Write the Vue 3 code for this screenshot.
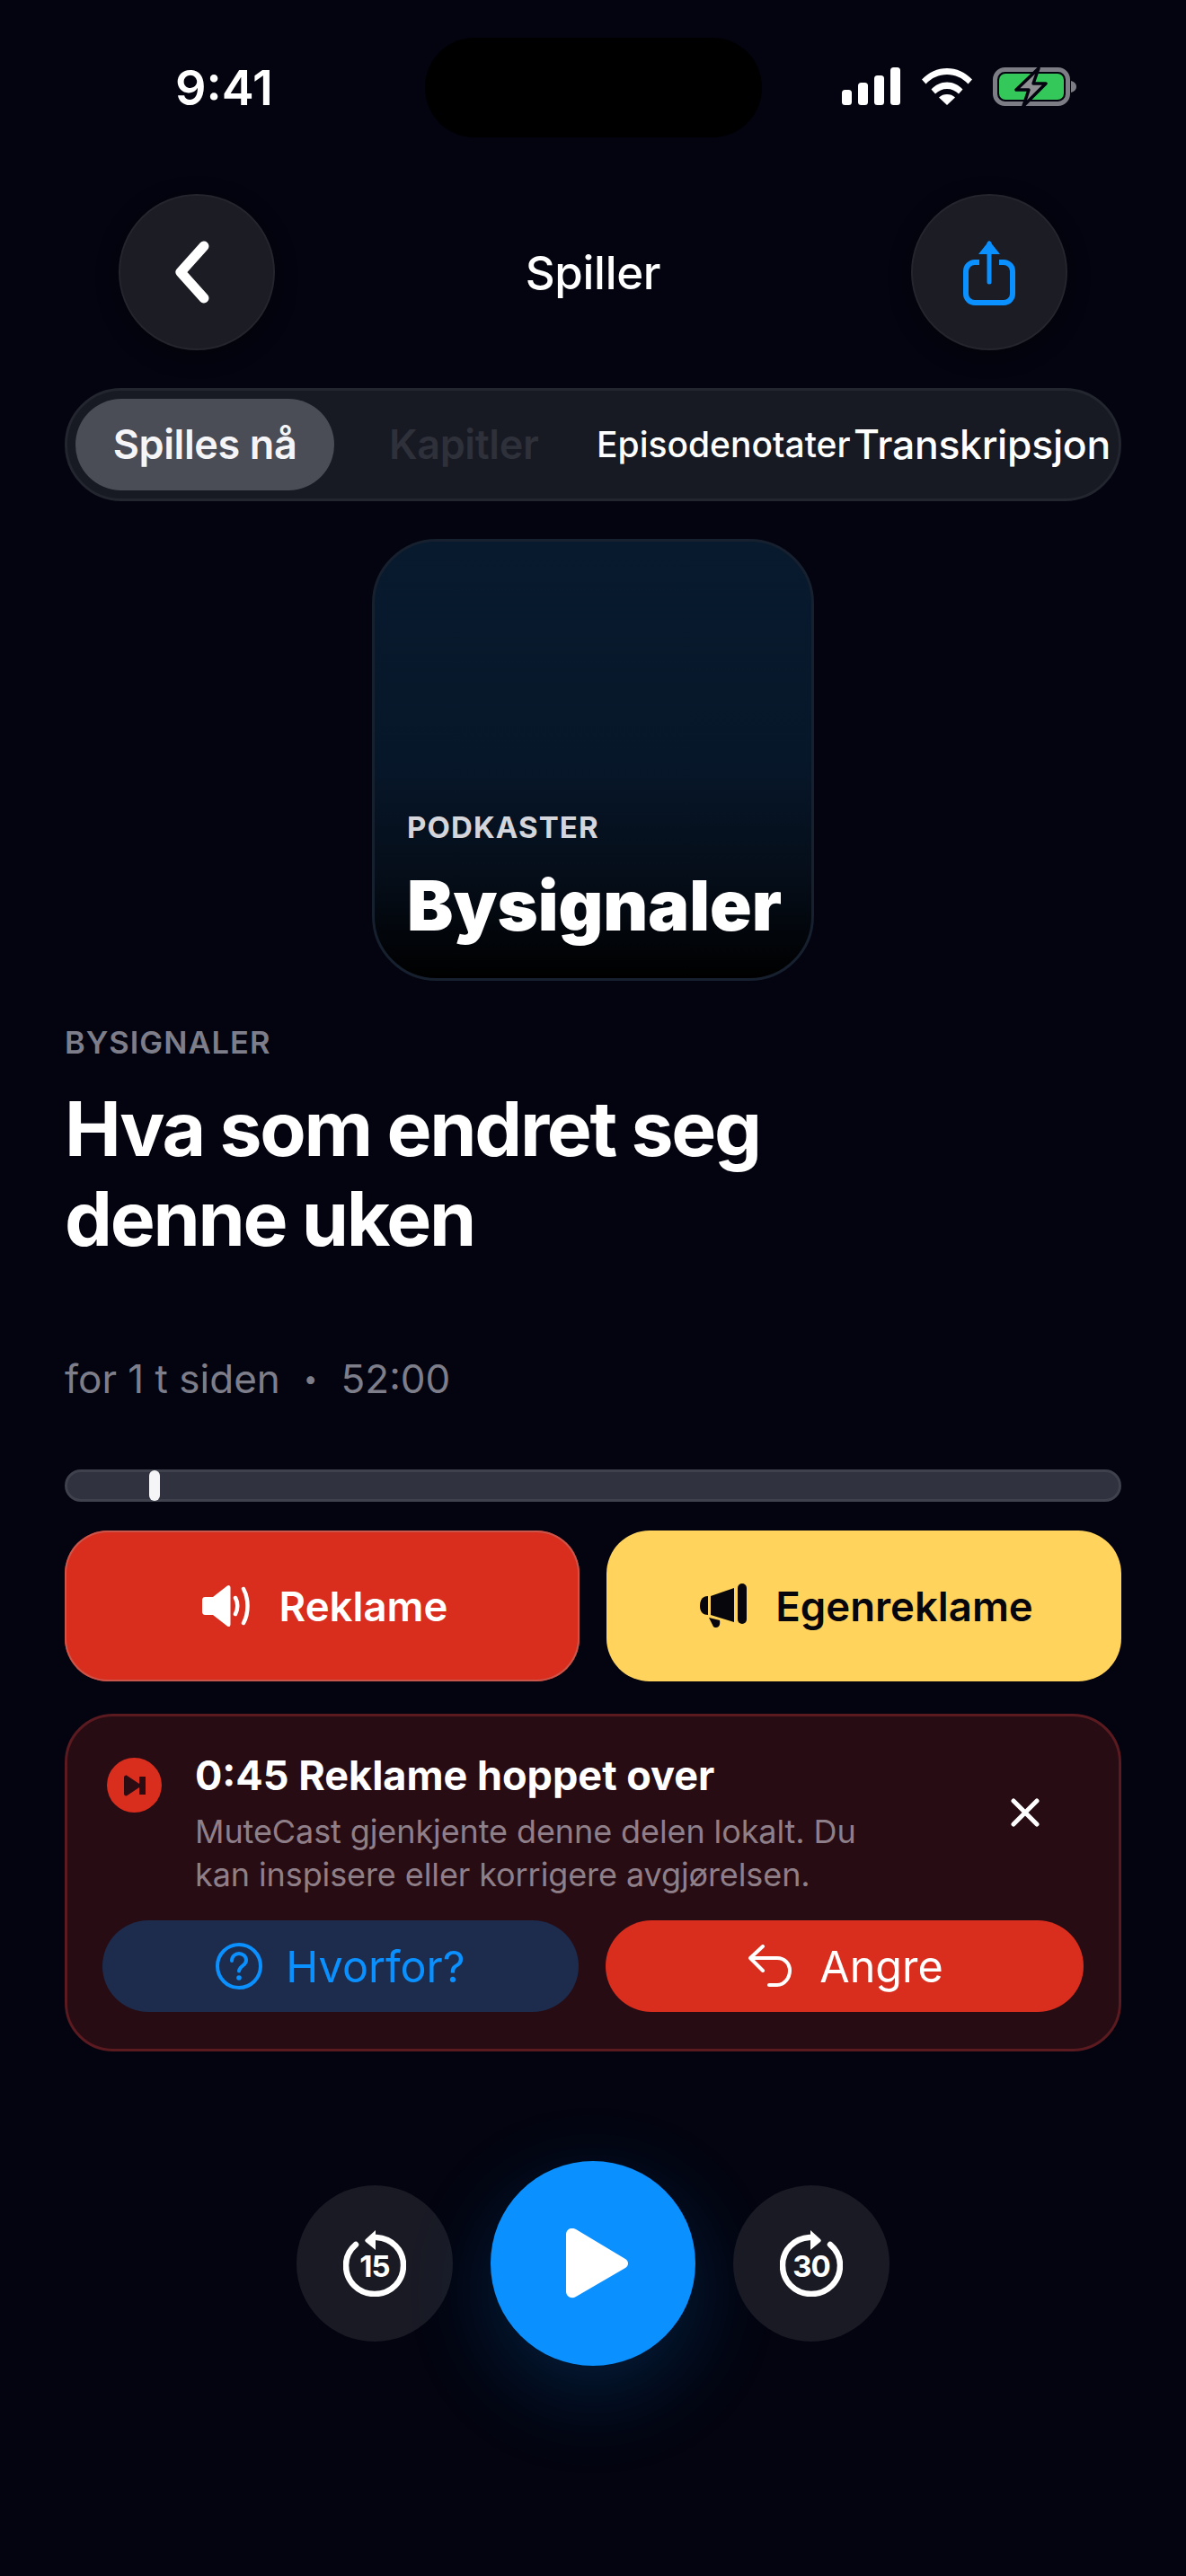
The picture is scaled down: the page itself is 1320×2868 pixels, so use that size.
<script setup>
const tabs = [
  { label: 'Spilles nå', cls: 'tab-active' },
  { label: 'Kapitler', cls: 'tab-dim' },
  { label: 'Episodenotater', cls: 'tab-small' },
  { label: 'Transkripsjon', cls: 'tab-plain' },
]
</script>

<template>
  <div class="page">
    <div class="status">
      <div class="time">9:41</div>
      <div class="island"></div>
      <div class="status-icons">
        <svg class="sig" width="66" height="42" viewBox="0 0 66 42">
          <rect x="0" y="25" width="11" height="17" rx="3.5" fill="#fff"/>
          <rect x="18" y="17" width="11" height="25" rx="3.5" fill="#fff"/>
          <rect x="36" y="9" width="11" height="33" rx="3.5" fill="#fff"/>
          <rect x="54" y="0" width="11" height="42" rx="3.5" fill="#fff"/>
        </svg>
        <svg class="wifi" width="58" height="42" viewBox="0 0 58 42">
          <path d="M1 13.500C8.500 5.500 18.500 1 29 1s20.500 4.500 28 12.500l-4.500 5C46 11.500 38 8 29 8S12 11.500 5.500 18.500z" fill="#fff"/>
          <path d="M11.500 24.500C16 19.500 22 16.500 29 16.500s13 3 17.500 8L42 29.500C38.500 26 34 24 29 24s-9.500 2-13 5.500z" fill="#fff"/>
          <path d="M20 33.500c2.500-2.500 5.500-3.500 9-3.500s6.500 1 9 3.500L29 42z" fill="#fff"/>
        </svg>
        <svg class="bat" width="94" height="46" viewBox="0 0 94 46">
          <rect x="2.500" y="3.500" width="81" height="38" rx="11" fill="none" stroke="#7c7d85" stroke-width="5"/>
          <rect x="7" y="8" width="72" height="29" rx="7" fill="#34c759"/>
          <path d="M87 16c4 1 6 3.500 6 6.500s-2 5.500-6 6.500z" fill="#7c7d85"/>
          <path d="M51 2 26 26h14l-6 18 25-25H45z" fill="#8e8e93" stroke="#03040f" stroke-width="3.500" stroke-linejoin="round"/>
        </svg>
      </div>
    </div>

    <div class="nav">
      <button class="round nav-btn" aria-label="Tilbake">
        <svg class="chev" width="60" height="72" viewBox="0 0 60 72">
          <path d="M41 7 15 36l26 29" fill="none" stroke="#fff" stroke-width="11" stroke-linecap="round" stroke-linejoin="round"/>
        </svg>
      </button>
      <div class="nav-title">Spiller</div>
      <button class="round nav-btn" aria-label="Del">
        <svg width="60" height="76" viewBox="0 0 60 76">
          <path d="M19 27h-5a10 10 0 0 0-10 10v25a10 10 0 0 0 10 10h32a10 10 0 0 0 10-10V37a10 10 0 0 0-10-10h-5" fill="none" stroke="#0a91ff" stroke-width="6"/>
          <path d="M30 49V6" stroke="#0a91ff" stroke-width="5" stroke-linecap="round"/>
          <path d="M18 18 30 3l12 15z" fill="#0a91ff"/>
        </svg>
      </button>
    </div>

    <div class="tabs">
      <div v-for="t in tabs" :key="t.label" class="tab" :class="t.cls">{{ t.label }}</div>
    </div>

    <div class="cover">
      <div class="cover-kicker">PODKASTER</div>
      <div class="cover-title">Bysignaler</div>
    </div>

    <div class="info">
      <div class="kicker">BYSIGNALER</div>
      <h1 class="title">Hva som endret seg<br>denne uken</h1>
      <div class="meta"><span>for 1 t siden</span><span class="dot">•</span><span>52:00</span></div>
    </div>

    <div class="progress"><div class="thumb"></div></div>

    <div class="marks">
      <button class="mark mark-red">
        <svg width="56" height="50" viewBox="0 0 56 50">
          <path d="M3 15h9L28 2.500c1.500-1.200 3.500-.5 3.500 2v41c0 2.500-2 3.200-3.500 2L12 35H3c-1.500 0-3-1.500-3-3V18c0-1.500 1.500-3 3-3z" fill="#fff"/>
          <path d="M37 16c3 5 3 13 0 18" fill="none" stroke="#fff" stroke-width="4.500" stroke-linecap="round"/>
          <path d="M46 6c6 11 6 27 0 38" fill="none" stroke="#fff" stroke-width="4.500" stroke-linecap="round"/>
        </svg>
        <span>Reklame</span>
      </button>
      <button class="mark mark-yellow">
        <svg width="54" height="50" viewBox="0 0 54 50">
          <path d="M12 14 38 5v38L12 35z" fill="#06060c"/>
          <path d="M9 14v21C4 35 0 32 0 25s3-11 9-11z" fill="#06060c"/>
          <rect x="42" y="0" width="10" height="45" rx="5" fill="#06060c"/>
          <path d="M10 38l12 3c1 5-1 8-4 8s-3-1-4-3z" fill="#06060c"/>
        </svg>
        <span>Egenreklame</span>
      </button>
    </div>

    <div class="banner">
      <div class="banner-top">
        <div class="skip-badge">
          <svg width="26" height="24" viewBox="0 0 26 24">
            <path d="M1 3c0-2 2-3 3.500-2L18 10v-8h7v20h-7v-8L4.500 23C3 24 1 23 1 21z" fill="#2a0c12"/>
          </svg>
        </div>
        <div class="banner-text">
          <div class="banner-title">0:45 Reklame hoppet over</div>
          <div class="banner-desc">MuteCast gjenkjente denne delen lokalt. Du kan inspisere eller korrigere avgjørelsen.</div>
        </div>
        <svg class="close" width="32" height="32" viewBox="0 0 32 32">
          <path d="M3 3l26 26M29 3 3 29" stroke="#fff" stroke-width="5" stroke-linecap="round"/>
        </svg>
      </div>
      <div class="banner-actions">
        <button class="pill pill-blue">
          <svg width="52" height="52" viewBox="0 0 52 52">
            <circle cx="26" cy="26" r="24" fill="none" stroke="#0a91ff" stroke-width="4"/>
            <path d="M18 20c0-5 4-8 8-8s8 3 8 7.500c0 6-8 6.500-8 12" fill="none" stroke="#0a91ff" stroke-width="4" stroke-linecap="round"/>
            <circle cx="26" cy="39" r="2.800" fill="#0a91ff"/>
          </svg>
          <span>Hvorfor?</span>
        </button>
        <button class="pill pill-red">
          <svg width="50" height="48" viewBox="0 0 50 48">
            <path d="M17 2 3 15l14 14" fill="none" stroke="#fff" stroke-width="4" stroke-linecap="round" stroke-linejoin="round"/>
            <path d="M4 15h29c8 0 14 6 14 14s-6 16-14 16H24" fill="none" stroke="#fff" stroke-width="4" stroke-linecap="round"/>
          </svg>
          <span>Angre</span>
        </button>
      </div>
    </div>

    <div class="controls">
      <button class="round side" aria-label="Tilbake 15">
        <svg width="70" height="74" viewBox="0 0 70 74">
          <path d="M14 16C7 22 3 30 3 39c0 18 14 32 32 32s32-14 32-32c0-17-13-30-30-31" fill="none" stroke="#fff" stroke-width="6.500" stroke-linecap="round"/>
          <path d="M36 0 25 10c-1 1-1 2 0 3l11 9z" fill="#fff"/>
          <text x="35" y="52" text-anchor="middle" class="skip-num">15</text>
        </svg>
      </button>
      <button class="play" aria-label="Spill">
        <svg class="play-icon" width="70" height="78" viewBox="0 0 70 78">
          <path d="M0 7C0 1 6-2 11 1l55 33c4 2.500 4 7.500 0 10L11 76c-5 3-11 0-11-6z" fill="#fff"/>
        </svg>
      </button>
      <button class="round side" aria-label="Frem 30">
        <svg width="70" height="74" viewBox="0 0 70 74">
          <path d="M56 16c7 6 11 14 11 23 0 18-14 32-32 32S3 57 3 39C3 22 16 9 33 8" fill="none" stroke="#fff" stroke-width="6.500" stroke-linecap="round"/>
          <path d="M34 0 45 10c1 1 1 2 0 3l-11 9z" fill="#fff"/>
          <text x="35" y="52" text-anchor="middle" class="skip-num">30</text>
        </svg>
      </button>
    </div>
  </div>
</template>

<style>
html, body { margin: 0; background: #03040f; }
</style>

<style scoped>
.page {
  width: 1320px;
  height: 2868px;
  background: #03040f;
  color: #fff;
  font-family: Inter, "Liberation Sans", sans-serif;
  display: flex;
  flex-direction: column;
  overflow: hidden;
}
button { font-family: inherit; border: 0; padding: 0; cursor: pointer; }

.status {
  display: grid;
  grid-template-columns: 473px 375px 1fr;
  height: 110px;
  margin-top: 42px;
}
.time {
  padding-left: 195px;
  font-size: 54px;
  font-weight: 600;
  line-height: 110px;
  margin-top: 1px;
}
.island { background: #000; border-radius: 55px; }
.status-icons {
  display: flex;
  align-items: flex-start;
  padding: 33px 0 0 89px;
}
.wifi { margin-left: 22px; }
.bat { margin-left: 22px; margin-top: -1px; }

.nav {
  margin-top: 64px;
  padding: 0 132px;
  display: flex;
  align-items: center;
  justify-content: space-between;
}
.round {
  border-radius: 50%;
  display: flex;
  align-items: center;
  justify-content: center;
}
.nav-btn {
  width: 174px;
  height: 174px;
  background: #1b1c24;
  border: 2px solid #24252d;
  box-shadow: 0 6px 24px rgba(0, 0, 0, .4);
}
.chev { margin-left: -6px; }
.nav-title { font-size: 51px; font-weight: 500; letter-spacing: -.3px; }

.tabs {
  margin: 42px 72px 0;
  height: 126px;
  box-sizing: border-box;
  background: #171923;
  border: 3px solid #23252f;
  border-radius: 63px;
  display: flex;
  align-items: center;
  padding: 0 9px;
  white-space: nowrap;
}
.tab { flex: none; font-size: 45px; font-weight: 600; line-height: 102px; letter-spacing: -.4px; }
.tab-active {
  width: 288px;
  text-align: center;
  background: #4a4c56;
  border-radius: 51px;
  color: #f5f5f7;
}
.tab-dim { margin-left: 61px; color: #2e303a; width: 165px; }
.tab-small { margin-left: 66px; font-size: 39px; width: 286px; font-weight: 500; letter-spacing: 0; }
.tab-plain { font-size: 44.500px; letter-spacing: -.3px; font-weight: 500; }

.cover {
  align-self: center;
  margin-top: 42px;
  width: 492px;
  height: 492px;
  box-sizing: border-box;
  border: 3px solid #16202e;
  border-radius: 72px;
  background: linear-gradient(180deg, #081a2e 0%, #07172a 50%, #050d18 78%, #000 100%);
  padding: 0 36px 35px;
  display: flex;
  flex-direction: column;
  justify-content: flex-end;
}
.cover-kicker {
  font-size: 33px;
  font-weight: 700;
  letter-spacing: 1.100px;
  color: #d4d6db;
  margin-bottom: 21px;
  line-height: 40px;
}
.cover-title {
  font-size: 77px;
  font-weight: 900;
  line-height: 92px;
  white-space: nowrap;
}

.info { padding: 0 72px; }
.kicker {
  margin-top: 46px;
  font-size: 34.500px;
  font-weight: 600;
  letter-spacing: 1px;
  color: #7d7e8a;
  line-height: 46px;
}
.title {
  margin: 23px 0 0;
  font-size: 84px;
  font-weight: 700;
  line-height: 100px;
  letter-spacing: -2.300px;
}
.meta {
  margin-top: 98px;
  font-size: 44px;
  color: #7d7e8a;
  line-height: 60px;
  display: flex;
}
.dot { font-size: 28px; margin: 0 26px; }

.progress {
  margin: 71px 72px 0;
  height: 36px;
  box-sizing: border-box;
  background: #30323f;
  border: 3px solid #3f414d;
  border-radius: 18px;
  position: relative;
}
.thumb {
  position: absolute;
  left: 91px;
  top: -2px;
  width: 12px;
  height: 34px;
  background: #f5f5f7;
  border-radius: 6px;
}

.marks {
  margin: 32px 72px 0;
  display: flex;
  gap: 30px;
}
.mark {
  flex: 1;
  height: 168px;
  box-sizing: border-box;
  padding-left: 6px;
  border-radius: 48px;
  display: flex;
  align-items: center;
  justify-content: center;
  gap: 30px;
  font-size: 45.500px;
  font-weight: 600;
}
.mark-red { background: #d92d1e; color: #fff; box-shadow: inset 0 0 0 2px #c9554b; }
.mark-yellow { background: #ffd35c; color: #06060c; }

.banner {
  margin: 36px 72px 0;
  box-sizing: border-box;
  height: 376px;
  background: #270c13;
  border: 3px solid #5a1a20;
  border-radius: 54px;
  padding: 0 39px;
}
.banner-top {
  display: flex;
  align-items: flex-start;
  height: 227px;
}
.skip-badge {
  margin: 46px 0 0 5px;
  width: 61px;
  height: 61px;
  border-radius: 50%;
  background: #d92d1e;
  display: flex;
  align-items: center;
  justify-content: center;
  flex: none;
}
.banner-text { margin: 38px 0 0 37px; width: 800px; flex: none; }
.banner-title { font-size: 45px; font-weight: 700; line-height: 56px; }
.banner-desc {
  margin-top: 10px;
  font-size: 36px;
  line-height: 48px;
  letter-spacing: -.1px;
  color: #8f7f88;
}
.close { margin: 91px 0 0 108px; flex: none; }
.banner-actions { display: flex; gap: 30px; }
.pill {
  flex: 1;
  height: 102px;
  border-radius: 51px;
  display: flex;
  align-items: center;
  justify-content: center;
  gap: 26px;
  font-size: 48.500px;
  font-weight: 400;
}
.pill-blue { background: #1d2c4d; color: #0a91ff; }
.pill-red { background: #d92d1e; color: #fff; gap: 30px; padding-left: 2px; }

.controls {
  margin-top: 122px;
  display: flex;
  align-items: center;
  justify-content: center;
  gap: 42px;
}
.side { width: 174px; height: 174px; background: #191a24; }
.play {
  width: 228px;
  height: 228px;
  border-radius: 50%;
  background: #0a91ff;
  box-shadow: 0 30px 100px rgba(10, 145, 255, .2);
  display: flex;
  align-items: center;
  justify-content: center;
}
.play-icon { margin-left: 10px; }
.skip-num {
  font-family: Inter, sans-serif;
  font-size: 33px;
  font-weight: 700;
  letter-spacing: -1px;
  fill: #fff;
}
</style>
